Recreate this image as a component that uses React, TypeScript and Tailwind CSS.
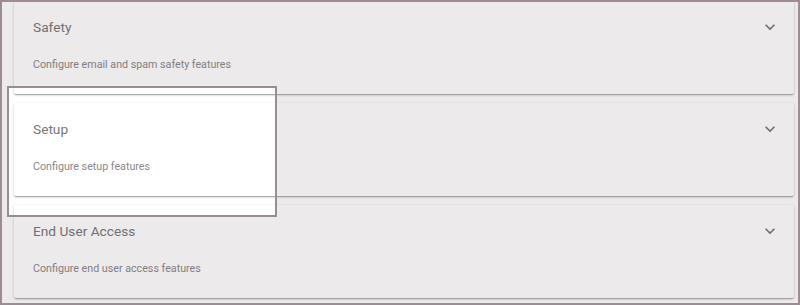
import React from 'react';

const sections = [
  { title: 'Safety', desc: 'Configure email and spam safety features' },
  { title: 'Setup', desc: 'Configure setup features' },
  { title: 'End User Access', desc: 'Configure end user access features' },
];

function ExpandMore() {
  return (
    <svg width="20" height="20" viewBox="0 0 24 24" className="fill-[#757575]">
      <path d="M16.59 8.59L12 13.17 7.41 8.59 6 10l6 6 6-6z" />
    </svg>
  );
}

export default function App() {
  return (
    <div
      className="relative w-[800px] h-[305px] overflow-hidden border-2 border-[#9b8d93] bg-white"
      style={{ fontFamily: 'Roboto, "Liberation Sans", sans-serif' }}
    >
      <div className="flex flex-col gap-[9px] pl-[12px] pr-[4px] -mt-px">
        {sections.map((s) => (
          <div
            key={s.title}
            className="flex h-[93px] rounded-[2px] bg-white pl-[19px] pr-[14px] shadow-[0_1px_3px_rgba(0,0,0,0.2),0_1px_1px_rgba(0,0,0,0.14),0_2px_1px_-1px_rgba(0,0,0,0.12)]"
          >
            <div className="flex-1 pt-[16px]">
              <div className="text-[13.7px] leading-5 text-[#777]">{s.title}</div>
              <div className="mt-[20px] text-[10.7px] leading-4 text-[#888]">{s.desc}</div>
            </div>
            <div className="pt-[16px]">
              <ExpandMore />
            </div>
          </div>
        ))}
      </div>

      {/* tour spotlight over the Setup card */}
      <div className="absolute left-[5px] top-[84px] h-[131px] w-[270px] border-2 border-[#9a8c92] shadow-[0_0_0_2000px_rgba(80,50,65,0.1)]" />
    </div>
  );
}
